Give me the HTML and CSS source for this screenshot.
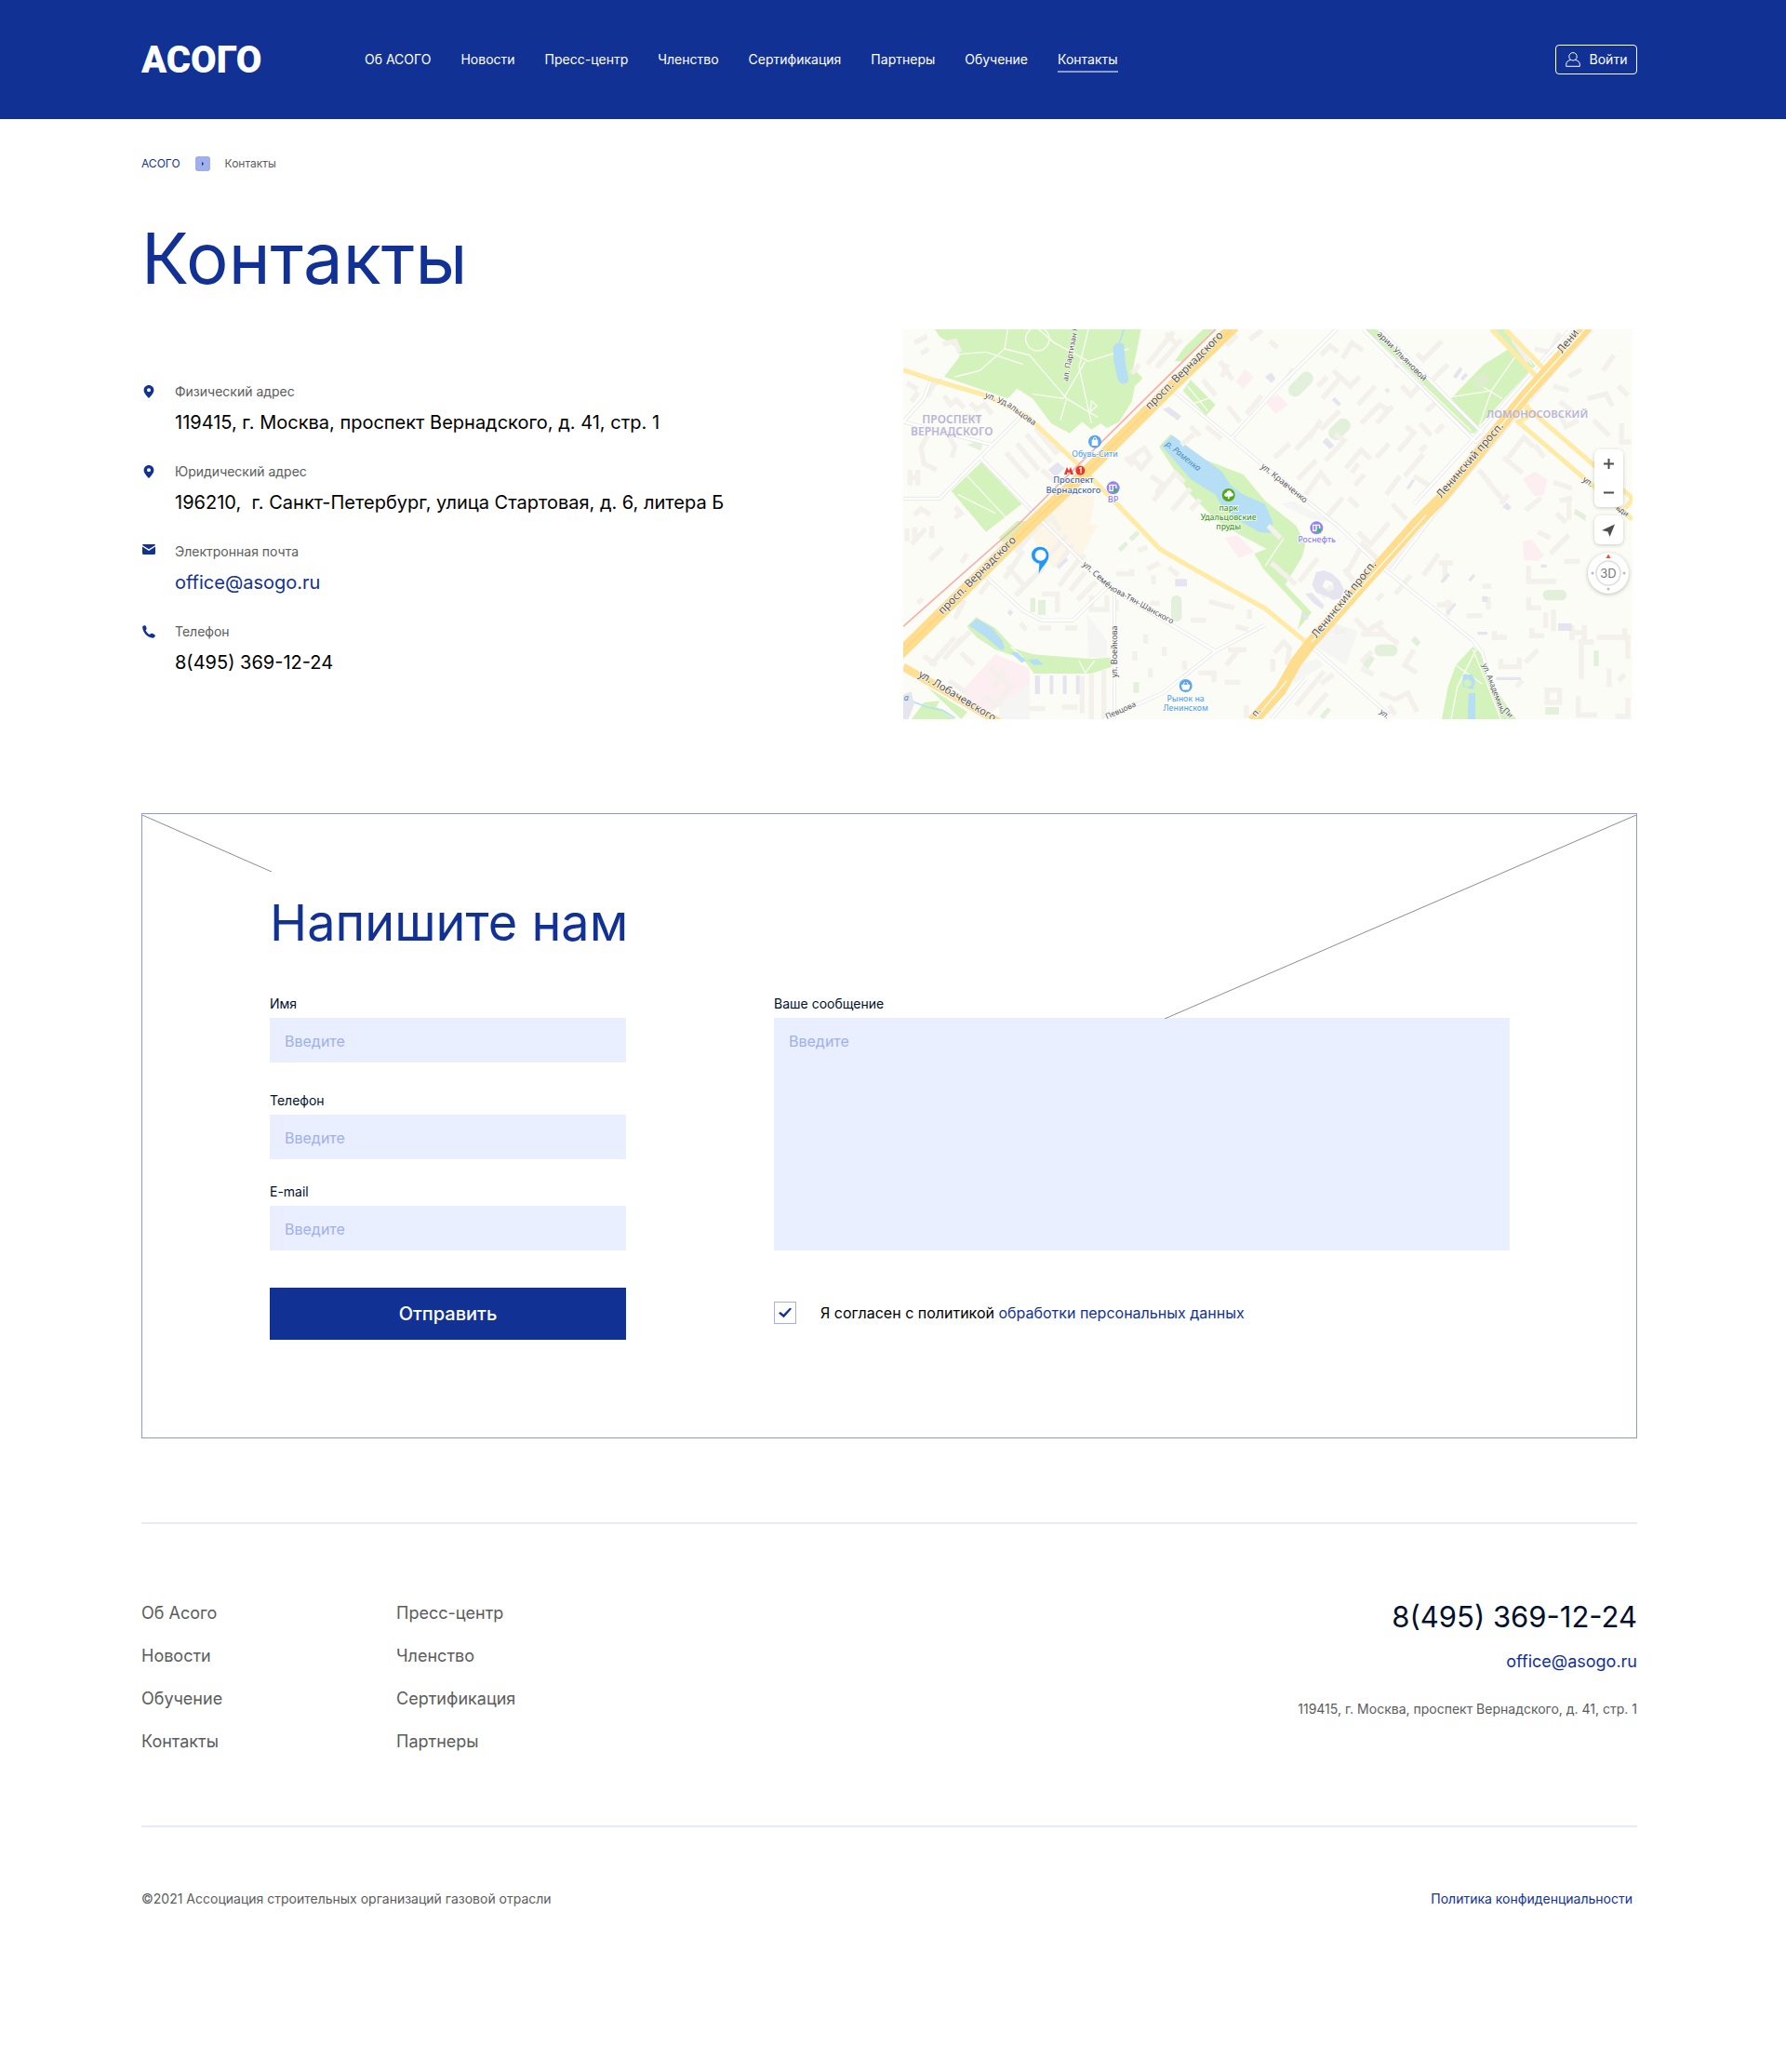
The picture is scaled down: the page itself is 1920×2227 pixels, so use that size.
FILE: index.html
```html
<!DOCTYPE html>
<html lang="ru">
<head>
<meta charset="utf-8">
<meta name="viewport" content="width=device-width, initial-scale=1">
<title>Контакты — АСОГО</title>
<link rel="stylesheet" href="styles.css">
</head>
<body>
<header class="header">
  <a class="logo" href="#">АСОГО</a>
  <nav class="nav">
    <a href="#">Об АСОГО</a>
    <a href="#">Новости</a>
    <a href="#">Пресс-центр</a>
    <a href="#">Членство</a>
    <a href="#">Сертификация</a>
    <a href="#">Партнеры</a>
    <a href="#">Обучение</a>
    <a class="nav-current" href="#">Контакты</a>
  </nav>
  <button class="login" type="button">
    <svg width="16" height="16" viewBox="0 0 16 16" fill="none" stroke="currentColor"><circle cx="8" cy="4.8" r="4.2"/><path d="M5.6 8.4C2.4 9 .7 10.800 .7 13.200V15.300H15.300V13.200C15.300 10.800 13.600 9 10.400 8.400"/></svg>
    Войти
  </button>
</header>

<main class="wrap">
  <nav class="crumbs">
    <a href="#">АСОГО</a>
    <svg width="16" height="16" viewBox="0 0 16 16"><rect width="16" height="16" rx="3" fill="#a0b0ea"/><path d="M7 5.800L9 8L7 10.200Z" fill="#123194"/></svg>
    <span>Контакты</span>
  </nav>
  <h1 class="title">Контакты</h1>

  <section class="contacts">
    <dl class="contact-list">
      <div class="contact">
        <svg class="contact-icon" viewBox="0 0 16 20"><path fill-rule="evenodd" d="M8 3C4.900 3 2.600 5.300 2.600 8.200C2.600 11.300 5.500 14.500 8 17C10.500 14.500 13.400 11.300 13.400 8.200C13.400 5.300 11.100 3 8 3ZM8 6.200A2 2 0 1 1 8 10.200A2 2 0 1 1 8 6.200Z"/></svg>
        <dt>Физический адрес</dt>
        <dd>119415, г. Москва, проспект Вернадского, д. 41, стр. 1</dd>
      </div>
      <div class="contact">
        <svg class="contact-icon" viewBox="0 0 16 20"><path fill-rule="evenodd" d="M8 3C4.900 3 2.600 5.300 2.600 8.200C2.600 11.300 5.500 14.500 8 17C10.500 14.500 13.400 11.300 13.400 8.200C13.400 5.300 11.100 3 8 3ZM8 6.200A2 2 0 1 1 8 10.200A2 2 0 1 1 8 6.200Z"/></svg>
        <dt>Юридический адрес</dt>
        <dd>196210,&nbsp; г. Санкт-Петербург, улица Стартовая, д. 6, литера Б</dd>
      </div>
      <div class="contact">
        <svg class="contact-icon" viewBox="0 0 16 20"><path d="M2 2H14Q15 2 15 3L8 7.200L1 3Q1 2 2 2ZM1 4.600L8 9L15 4.600V11.500Q15 13 13.500 13H2.500Q1 13 1 11.500Z"/></svg>
        <dt>Электронная почта</dt>
        <dd><a href="#">office@asogo.ru</a></dd>
      </div>
      <div class="contact">
        <svg class="contact-icon" viewBox="0 0 16 20"><path d="M1.200 4.500C1.600 3.600 2.800 3 4 3.200C5 3.500 5.500 5.500 5.600 6.600C5.600 7.600 4.600 8 4.600 8.500C5.300 10.300 7 12 8.700 13C9.300 13 9.900 11.600 11 11.700C12.300 11.900 14.500 13 14.900 14C14.900 15.300 13.600 16.700 12.300 16.800C6.300 16.300 1 10.300 1.200 4.500Z"/></svg>
        <dt>Телефон</dt>
        <dd>8(495) 369-12-24</dd>
      </div>
    </dl>

    <div class="map">
      <svg class="map-canvas" viewBox="33 27 2352 1257" role="img" aria-label="Карта проезда">
        <rect x="33" y="27" width="2352" height="1257" fill="#fbfcf6"/>
        <!-- quarters -->
        <g fill="#f5f5f4">
          <path d="M625 945L690 1030V1085H630ZM1385 960L1500 1000L1460 1110L1350 1040ZM1500 860L1620 700L1680 690L1605 800ZM1300 1110L1370 1090L1390 1110L1290 1170ZM345 1230L440 1130V1284H340ZM1250 590L1290 580L1420 650L1350 640Z"/>
        </g>
        <path fill="#fdf6e6" d="M440 660L560 520L650 570L640 640L520 800L460 720ZM470 645L600 645L660 660L600 770Z"/>
        <g fill="#fdeff1">
          <path d="M220 1195L330 1075L440 1120V1170L350 1230L290 1284ZM1070 700L1110 690L1165 745L1115 765ZM1200 260L1240 235L1275 270L1235 300ZM1105 195L1135 155L1165 180L1130 220ZM2030 510L2070 485L2110 510L2100 560L2070 565ZM2030 710L2060 705L2100 755L2080 775L2035 770Z"/>
        </g>
        <!-- parks -->
        <g fill="#d4f2bb">
          <path d="M135 27L150 50L205 85L215 115L165 180L370 250L400 218L450 250L510 330L570 362L610 325L640 350L670 330L690 345L730 325L770 260L780 210L805 185L775 150L800 27Z"/>
          <path d="M908 130L940 85L1000 27H1035L935 130ZM935 225L960 190L1040 270L1010 305ZM188 548L285 455L415 590L300 680ZM340 700L400 645H440L355 715Z"/>
          <path d="M858 405L895 365L1000 445L1130 495L1200 580L1300 660L1330 720L1320 760L1265 850L1350 940L1305 995L1320 935L1195 800L1165 750L1205 735L1120 690L1040 640L960 560Z"/>
          <path d="M1525 27H1560L1890 340L1880 360Q1865 368 1850 350ZM1800 250L1905 140L1990 88L2050 165L1885 345ZM1940 27H1980L2075 150H2055Z"/>
          <path d="M238 985L268 955L330 990L390 1055L450 1075L640 1090L700 1085L705 1115L640 1137H455L420 1090L330 1060L270 1020ZM60 1284L100 1230L150 1225L140 1245L200 1284ZM110 1180L240 1260L220 1284Z"/>
          <path d="M1770 1284L1790 1180L1815 1110L1870 1050L1900 1075L1910 1140L2010 1284Z"/>
        </g>
        <path fill="none" stroke="#fbfcf6" stroke-width="4" d="M370 27L360 90L280 160L200 180M360 90L440 110L560 250L540 320M470 27L520 70L630 130L760 90M620 130L550 250L450 235M560 250L660 310M630 27L600 150L640 330M180 110L300 100L420 140M465 20a38 38 0 1 0 2 0M640 258l18 16l-22 18zM950 210L1015 290M1030 245L960 270M240 500L370 640M210 560L330 620M1260 700L1200 790M1800 245L1930 225L2010 110M1930 225L1890 340M1890 205L1965 250M1880 1060L1820 1180L1800 1284M1870 1060L1920 1180L1960 1284M1815 1110L1900 1170M600 1095L620 1135L650 1095M380 1050L420 1085M1530 35L1865 355M1975 30L2060 140"/>
        <g fill="#e2f0dc">
          <rect x="1267" y="182" width="96" height="44" rx="22" transform="rotate(-45 1315 204)"/>
          <rect x="1400" y="326" width="80" height="46" rx="22" transform="rotate(-45 1440 349)"/>
          <rect x="897" y="885" width="34" height="84" rx="16"/>
          <rect x="1553" y="1043" width="74" height="38" rx="18"/>
          <rect x="2096" y="867" width="76" height="34" rx="16"/>
          <rect x="1870" y="170" width="54" height="44" rx="20" fill="#dceecb" transform="rotate(-45 1897 192)"/>
          <path d="M725 735l24-24 10 10-24 24zM760 700l26-24 10 10-24 24zM443 893h16v46h-16zM468 900h24v48h-24zM775 1165h18v34h-18zM1514 1110l22-34 18 12-22 34zM1670 1030l14-14 18 20-12 14zM2260 1063h16v50h-16zM2104 1245h44v24h-44zM1376 1275l26-30 10 10-24 30zM2200 605l36 22-4 18-36-24zM240 400l26-12 24 12-8 18zM1585 223l10-8 8 10-8 8z"/>
        </g>
        <!-- water -->
        <g fill="#b6dff5">
          <path d="M710 85Q720 62 745 75L750 140L760 185Q757 207 735 200L725 190L712 130Z"/>
          <path d="M866 402L900 368L1060 485L1090 530L1130 560L1200 590L1225 650L1220 684L1180 680L1110 640L1060 595L1040 560L960 510Z"/>
          <path d="M245 982L270 960L320 990L352 1030L360 1055L350 1062L300 1020ZM378 1068L400 1068L430 1095L415 1102ZM435 1092L465 1090L486 1108L455 1110Z"/>
          <path d="M1838 1140h30l10 20-8 28-32-10zM1856 1200h22v84h-24z"/>
        </g>
        <circle cx="1853" cy="1168" r="12" fill="#d4f2bb"/>
        <path fill="none" stroke="#b6dff5" stroke-width="5" d="M33 1215L110 1245L160 1255L200 1280M745 27L730 70"/>
        <!-- houses -->
        <g fill="none" stroke="#f4f0ec" stroke-width="16">
          <path d="M70 70l40-20M90 105l25-15M160 75l40-10l15 35M45 200l35 20M60 260l20-30M110 245l20-40l30-15M165 240l20 30l20-15l25 25M250 265l20 20l25-15l25 30M235 305l50 15M55 480v50M80 480v50M55 505h25M110 370l-20 40l10 50l40 20M180 370l20 35l-10 35M70 625l20-20l30 20M200 600l20 20l-20 15M400 395l70 85M430 365l80 90M460 345l70 85M365 425l70 80M480 480l50 45M520 405l20 15M820 140l85-105M850 150l80-90M880 40l30 30M770 170l25-30M1000 190l40 50M1055 130l40 60M1075 80l35-35M1080 275l40 50M1140 300l50-60M1060 180l20-40M1150 60l40-30M930 400l40-35M990 370l-30-30M1010 340l50 40M770 440l40-30l20 30l-30 35zM750 440l25 25M840 580l70-90l30 30M900 610l60-70M960 610l30-35M830 500l40 25l-20 30"/>
          <path d="M1215 65l25 20M1290 155l-20 35M1380 110l30-30l25 20M1450 120l30-50l35 25M1370 210l30-30M1385 250l60-70M1230 440l50-45M1300 415l60-65M1340 380l40-60M1420 160l55 50l30-30M1500 270l55-60M1510 330l60-60l30 20M1560 330l50-55M1640 210l30 30l35-40M1620 150l30-40M1690 105l20 20l60-60M1740 190l50-50M1720 290l35-30M1440 290l-60 60M1230 490l40 40M1305 510l60-60M1330 560l50-70l30 40M1395 450l60-65l-30-20M1460 475l50-60l30 30M1480 490l20-30M1560 440l40-45M1630 420l50-60l-25-20M1650 500l60-70M1700 420l20-20M1590 560l45-60M1610 590l45 50M1490 530l30-35M1400 630l50-60M1750 360l25-25M1700 330l35 40M1680 500l50 30M1500 600l-30-30M2000 60l50 70M2070 90l50 10l30-60M2130 210l50 15M2150 260l40 30M2180 180l40-25M2240 250l60-15l20 40M2260 320l50 50M2290 160l35-50M2340 210l30 30M2350 330v60h30M2150 300l20 40l40-20M1985 440l50-65l30 30M1970 440l60 50M2070 400l30 40M1890 480l40 50M1920 520l50 60M1960 590l25-30M2130 520l60 20M2150 580l40-10M2180 580v60M2040 610l50-40M2140 620l30 30"/>
          <path d="M45 670v40M70 665v45M125 660v40M60 720l45-50M120 770l40-40M200 960l30-60M280 880l30-40M220 780l20-30M80 910l15-15M100 1080l40 30M120 1110l80-90M165 1090l60-70M190 1060l60-60M180 1160l60 40M260 1110l-40-40M395 745l75-85l40-30l30 45M360 830l60-90M370 790l50 60M395 885l90-90M500 760l60-70M530 790l50-70M535 855l60-80l25-20M570 870l50-60M595 900l60-60M410 975l20 20M470 990h40M555 990h40M640 885v45h50v-45M720 900v35M480 880h50v60M440 1250h50M545 1245h50M640 1140v144M680 1125v159M610 1145v120M820 800l40-20M890 795l30 25M840 850v-30M720 815h50v-15M830 910h30M790 740l30-10M1020 905l80 20M960 965h50M1105 985l40 10M1150 960v-30M815 1010v30M780 1065v30M830 1120v30M875 1050v30M940 1095v30M1075 1110l35-45M1080 1060h60M1070 1165h50M985 1135h50v30M1140 1240v40M310 1120l70 60l-60 70M290 1210l60 30M330 1180l30-60"/>
          <path d="M1310 840l60-75M1385 890l30-35M1500 680l40 40l60-70M1460 820l55-100l60 60M1455 800l40 50M1600 745l15-15M1630 730l20-25M1710 820l30-40l20-30M1620 880l50-60M1560 900l20-20M1760 780h45M1780 780v55M1900 855h30M1790 900v50M1755 915h50M1850 950h50M1920 890v40M2050 890v35h40M2105 940v50M2130 930v70M2060 990v25h40M2190 980v50M2230 980v50M2190 1005h40M2360 990v40M2050 790v50h80v-10M2120 750l60-60M2080 680l40 20M2165 775h50M2280 775h50M1930 1020h50M1940 1000v30M1535 1010h50M1540 990l40-20M1430 1010v-30M1510 1010h30M1430 1000h30M1510 1100l35-35M1510 1120l40 20M1490 960l40 40l30-20l40 40l30 20M1680 1060l-30 50l40 25M1380 1170l40-30M1400 1200l-60 70M1390 1130l-90 110M1570 1200l50 20l40-20l30 60M1600 1240l20 30M1960 1090v25h60v-30M2210 1035h50M2220 1035v120M2270 1020h100v70M2310 1120v60M2340 1160l20-20M2110 1190h40v40h-40zM2210 1210v60h60M2370 1215v60h-40M2010 1180l20-20M2040 1100l40-40M1230 1070l30-35l20 20M1225 1130v-40M1280 1050l-10 60M1210 660l40 40M1220 780l80 70"/>
        </g>
        <g fill="#e6e5ef">
          <path d="M870 285l20-8 40 30-12 14zM500 480l30-25 24 20-30 28zM1200 180l20-14 14 20-14 14zM1385 390l14-14 24 26-14 12zM1415 255l10-10 20 22-8 8zM1805 180l24-32 8 8-20 30zM1830 185l16-18 8 8-16 18zM910 832h38v24h-38zM527 792l32-30 6 10-30 28zM458 1143h16v60h-16zM505 1143h12v60h-12zM548 1143h12v60h-12zM590 1143h12v60h-12zM2145 975h44v24h-44zM1945 1148h80v10h-80zM1900 888h18v18h-18zM1765 840l24-28 8 6-24 28zM1785 940l26-32 6 6-26 32zM1855 835l16-20 8 6-16 20zM1315 945l10-6 16 20-10 6zM2090 785h18v10h-18zM1885 1002h32v10h-32zM2125 130l12-8 8 14-10 12zM33 1205l26-10 10 40-20 49h-16zM368 940l10-10 10 10-10 12zM1655 540l20-30 8 4-18 28zM1965 600l14-14 16 14-10 12z"/>
          <path d="M1330 880l20-4 40 40-4 14-30-20zM1365 810l24-6 26 10 26 24 14 30-10 26-26 6-24-14-30-10-14-26zm30 24l-10 20 20 20 16-10-4-22z"/>
        </g>
        <!-- side streets -->
        <g fill="none" stroke-linejoin="round">
          <path stroke="#e3e3e6" stroke-width="12" d="M33 573H150L280 440L410 310M33 325L320 400M122 190L100 250L33 325M280 440L490 655M480 645L610 775L700 860L1040 1065M300 825L420 935L480 965H580L700 850M714 870V1284M680 1284L870 1200L1040 1065L1200 980M910 230L1200 470L1440 665L1555 775L1870 1030L1900 1070L1912 1110M1090 380L1245 210L1430 27M1350 1050L1600 1270M1220 1284L1330 1155M1517 27L1880 390L1910 360M1568 27L1900 360M2185 27L2050 175L1890 360L1680 590M2255 27L2140 150L1830 520L1740 630L1610 800"/>
          <path stroke="#fff" stroke-width="8" d="M33 573H150L280 440L410 310M33 325L320 400M122 190L100 250L33 325M280 440L490 655M480 645L610 775L700 860L1040 1065M300 825L420 935L480 965H580L700 850M714 870V1284M680 1284L870 1200L1040 1065L1200 980M910 230L1200 470L1440 665L1555 775L1870 1030L1900 1070L1912 1110M1090 380L1245 210L1430 27M1350 1050L1600 1270M1220 1284L1330 1155M1517 27L1880 390L1910 360M1568 27L1900 360M2185 27L2050 175L1890 360L1680 590M2255 27L2140 150L1830 520L1740 630L1610 800"/>
        </g>
        <!-- avenues -->
        <g fill="none" stroke-linejoin="round">
          <path stroke="#ffeaa6" stroke-width="15" d="M33 158L130 190L300 240L430 305L600 465L780 650L860 735L980 805L1200 927L1340 1042M1930 27L2075 180M1975 27L2100 155M2040 275L2385 572M2010 320L2385 640M2010 330L2045 310V270M2385 575L2360 605"/>
          <path stroke="#ffdf94" stroke-width="26" d="M33 1115L340 1292"/>
          <path stroke="#fbaeaa" stroke-width="5" d="M33 985L400 660L1042 25"/>
          <path stroke="#ffdd8f" stroke-width="38" d="M20 1075L450 650L640 470L895 215L1100 17M2240 17L2040 240L1770 570L1690 650L1350 1035L1300 1100L1250 1190L1160 1290"/>
          <path stroke="#ffcf74" stroke-width="3" d="M33 1062L450 650L640 470L895 215L1095 23"/>
          <path stroke="#fffaf0" stroke-width="4" d="M2230 27L2040 240L1950 350M1720 625L1350 1035M1270 1160L1170 1280"/>
        </g>
        <!-- labels -->
        <g class="map-street" font-size="27">
          <text transform="translate(563 195) rotate(-79)" font-size="25">ал. Партизан Г</text>
          <text transform="translate(295 245) rotate(23)">ул. Уд</text>
          <text transform="translate(366 274) rotate(36)">альцова</text>
          <text transform="translate(1560 44) rotate(45)">арии Ульяновой</text>
          <text transform="translate(1185 472) rotate(39)">ул. Кравченко</text>
          <text transform="translate(610 787) rotate(42)">ул. Семён</text>
          <text transform="translate(706 870) rotate(29)" font-size="25">ова-Тян-Шанского</text>
          <text transform="translate(722 1150) rotate(-90)">ул. Воейкова</text>
          <text transform="translate(690 1284) rotate(-24)" font-size="25">Певцова</text>
          <text transform="translate(1900 1108) rotate(69)" font-size="25">ул. Академика</text>
          <text transform="translate(1966 1256) rotate(48)" font-size="25">Пи</text>
          <text transform="translate(1568 1262) rotate(42)" font-size="25">ул.</text>
          <text transform="translate(2222 515) rotate(35)">ул.</text>
          <text transform="translate(2330 605) rotate(38)" font-size="25">ьди</text>
        </g>
        <g class="map-street" font-size="35">
          <text transform="translate(828 287) rotate(-45)">просп. Вернадского</text>
          <text transform="translate(160 947) rotate(-45)">просп. Вернадского</text>
          <text transform="translate(1768 572) rotate(-49)">Ленинский просп.</text>
          <text transform="translate(1366 1024) rotate(-51)">Ленинский просп.</text>
          <text transform="translate(2158 106) rotate(-51)">Лени</text>
          <text transform="translate(80 1145) rotate(31)" font-size="34">ул. Лобачевского</text>
          <text transform="translate(1170 1278) rotate(-50)" font-size="30">п.</text>
        </g>
        <g class="map-area" text-anchor="middle">
          <text x="190" y="330" font-size="36">ПРОСПЕКТ</text>
          <text x="190" y="368" font-size="36">ВЕРНАДСКОГО</text>
          <text x="2078" y="312" font-size="34">ЛОМОНОСОВСКИЙ</text>
        </g>
        <g class="map-poi" font-size="28" text-anchor="middle">
          <text x="651" y="437" font-size="26" fill="#5aa5ee">Обувь-Сити</text>
          <text x="582" y="521" fill="#4267ad">Проспект</text>
          <text x="582" y="554" fill="#4267ad">Вернадского</text>
          <text x="710" y="586" fill="#8f7ff0">BP</text>
          <text x="1082" y="611" font-size="26" fill="#459a24">парк</text>
          <text x="1082" y="641" font-size="26" fill="#459a24">Удальцовские</text>
          <text x="1082" y="671" font-size="26" fill="#459a24">пруды</text>
          <text x="1367" y="714" font-size="26" fill="#8f7ff0">Роснефть</text>
          <text x="944" y="1226" font-size="26" fill="#5aa5ee">Рынок на</text>
          <text x="944" y="1256" font-size="26" fill="#5aa5ee">Ленинском</text>
        </g>
        <g class="map-river" font-size="27">
          <text transform="translate(878 400) rotate(39)">р. Раменка</text>
          <text x="35" y="1224">а</text>
        </g>
        <!-- places -->
        <circle cx="651" cy="389" r="21" fill="#5aa5ee"/>
        <path d="M641 383h20v19h-20z" fill="#fff"/><path d="M646 384q0-9 5-9t5 9" fill="none" stroke="#fff" stroke-width="3"/>
        <path fill="#ea3329" d="M552 495L561 471L567 483L573 471L582 495H574L570 486L567 492L564 486L560 495Z"/>
        <circle cx="604" cy="482" r="15" fill="#ea3329"/><path d="M601 475l5-2v18" fill="none" stroke="#fff" stroke-width="4"/>
        <circle cx="710" cy="538" r="21" fill="#9483f7"/>
        <path d="M699 529h10v18h-10zM709 529h10q4 12-4 14h-6" fill="none" stroke="#fff" stroke-width="4"/>
        <circle cx="717" cy="546" r="7" fill="#2fc254"/>
        <circle cx="1366" cy="667" r="21" fill="#9483f7"/>
        <path d="M1355 658h10v18h-10zM1365 658h10q4 12-4 14h-6" fill="none" stroke="#fff" stroke-width="4"/>
        <circle cx="1373" cy="675" r="7" fill="#2fc254"/>
        <circle cx="1082" cy="561" r="21" fill="#52a912"/>
        <path d="M1080 574v-8h-7q-6-2-4-8q2-4 6-4q2-7 9-7t9 7q5 1 5 6t-7 6h-6v8z" fill="#fff"/>
        <circle cx="944" cy="1176" r="21" fill="#5aa5ee"/>
        <path d="M931 1174h26l-4 14h-18zM936 1173l5-9M952 1173l-5-9" fill="#fff" stroke="#fff" stroke-width="3"/>
        <path fill="#1e98ff" d="M476 728A27 27 0 0 1 502 757C502 780 480 790 470 816L472 782A27 27 0 0 1 476 728Z"/>
        <circle cx="476" cy="755" r="18" fill="#fff"/>
      </svg>
      <div class="map-controls">
        <div class="map-zoom">
          <button type="button" aria-label="Приблизить"><svg width="31" height="31" viewBox="0 0 31 31" stroke="#4d4d4d" stroke-width="2"><path d="M10 15.500H21M15.500 10V21"/></svg></button>
          <button type="button" aria-label="Отдалить"><svg width="31" height="31" viewBox="0 0 31 31" stroke="#4d4d4d" stroke-width="2"><path d="M10 15.500H21"/></svg></button>
        </div>
        <button class="map-locate" type="button" aria-label="Моё местоположение"><svg width="31" height="31" viewBox="0 0 31 31" fill="#4d4d4d"><path d="M22 9.500L16.500 23L14.500 17.500L8 16Z"/></svg></button>
        <button class="map-compass" type="button">
          <svg width="44" height="44" viewBox="0 0 44 44"><circle cx="22" cy="22" r="13" fill="none" stroke="#ddd" stroke-width="1.500"/><path d="M22 1.500L24.500 6H19.500Z" fill="#f43"/><circle cx="5" cy="22" r="1.500" fill="#bbb"/><circle cx="39" cy="22" r="1.500" fill="#bbb"/><circle cx="22" cy="39" r="1.500" fill="#bbb"/></svg>
          <span>3D</span>
        </button>
      </div>
    </div>
  </section>

  <form class="feedback">
    <svg class="fold fold-left" viewBox="0 0 139 61"><path d="M0 0L139 61"/></svg>
    <svg class="fold fold-right" viewBox="0 0 507 219"><path d="M0 219L507 0"/></svg>
    <h2>Напишите нам</h2>
    <div class="feedback-grid">
      <div class="fields">
        <div class="field field-name"><label for="name">Имя</label><input id="name" type="text" placeholder="Введите"></div>
        <div class="field"><label for="phone">Телефон</label><input id="phone" type="tel" placeholder="Введите"></div>
        <div class="field"><label for="email">E-mail</label><input id="email" type="email" placeholder="Введите"></div>
      </div>
      <div class="field field-message"><label for="message">Ваше сообщение</label><textarea id="message" placeholder="Введите"></textarea></div>
      <button class="submit" type="submit">Отправить</button>
      <div class="consent">
        <input id="consent" type="checkbox" checked>
        <label for="consent">Я согласен с политикой <a href="#">обработки персональных данных</a></label>
      </div>
    </div>
  </form>
</main>

<footer class="wrap footer">
  <div class="footer-main">
    <nav class="footer-links">
      <a href="#">Об Асого</a><a href="#">Пресс-центр</a>
      <a href="#">Новости</a><a href="#">Членство</a>
      <a href="#">Обучение</a><a href="#">Сертификация</a>
      <a href="#">Контакты</a><a href="#">Партнеры</a>
    </nav>
    <address class="footer-contacts">
      <span class="footer-phone">8(495) 369-12-24</span>
      <a class="footer-email" href="#">office@asogo.ru</a>
      <span class="footer-address">119415, г. Москва, проспект Вернадского, д. 41, стр. 1</span>
    </address>
  </div>
  <div class="footer-bottom">
    <span>©2021 Ассоциация строительных организаций газовой отрасли</span>
    <a href="#">Политика конфиденциальности</a>
  </div>
</footer>
</body>
</html>
```
FILE: styles.css
```css
:root {
  --blue: #123194;
  --grey: #5c5c5c;
  --ink: #020f2c;
  --field: #e9effe;
  --hint: #a0b0ea;
  --rule: #e6eafa;
}

* { box-sizing: border-box; }

body {
  margin: 0;
  background: #fff;
  color: #000;
  font: 14px/20px Inter, "Liberation Sans", sans-serif;
}

a { color: inherit; text-decoration: none; }
button, input, textarea { font: inherit; }
button { cursor: pointer; }
svg { display: block; }

.wrap { padding: 0 160px 0 152px; }

/* header */
.header {
  display: flex;
  align-items: center;
  height: 128px;
  padding: 0 160px 0 152px;
  background: var(--blue);
  color: #fff;
}
.logo {
  width: 240px;
  padding-top: 2px;
  font: 900 40px/40px Roboto, sans-serif;
}
.nav { display: flex; gap: 32px; }
.nav a { padding: 4px 0 2px; border-bottom: 2px solid transparent; white-space: nowrap; }
.nav .nav-current { border-color: #8c9bcc; }
.login {
  display: flex;
  align-items: center;
  justify-content: center;
  gap: 10px;
  width: 88px;
  height: 32px;
  margin-left: auto;
  padding: 0;
  border: 1px solid #fff;
  border-radius: 4px;
  background: none;
  color: #fff;
}

/* breadcrumbs and title */
.crumbs {
  display: flex;
  gap: 16px;
  padding-top: 40px;
  font-size: 12px;
  line-height: 16px;
  color: var(--grey);
}
.crumbs a { color: var(--blue); }
.title {
  margin: 49px 0 33px;
  font-size: 76px;
  line-height: 88px;
  font-weight: 400;
  color: var(--blue);
}

/* contacts */
.contacts {
  display: grid;
  grid-template-columns: minmax(0, 1fr) 784px;
  padding-right: 5px;
}
.contact-list {
  display: flex;
  flex-direction: column;
  gap: 31px;
  margin: 0;
  padding-top: 57px;
}
.contact {
  display: grid;
  grid-template-columns: 16px 1fr;
  gap: 11px 20px;
}
.contact-icon { width: 16px; height: 20px; fill: var(--blue); }
.contact dt { color: var(--grey); }
.contact dd { grid-column: 2; margin: 0; font-size: 20px; line-height: 24px; }
.contact dd a { color: var(--blue); }

/* map */
.map { position: relative; }
.map-canvas { width: 100%; height: auto; font-family: "Noto Sans", sans-serif; }
.map-street { fill: #555; stroke: #fff; stroke-width: 4px; paint-order: stroke; }
.map-area { fill: #b9b5d6; font-weight: 600; }
.map-poi { font-weight: 500; stroke: #fff; stroke-width: 4px; paint-order: stroke; }
.map-river { fill: #4d8cc0; font-style: italic; }
.map-controls {
  position: absolute;
  top: 129px;
  right: 4px;
  display: flex;
  flex-direction: column;
  align-items: center;
  gap: 9px;
}
.map-controls button { display: block; padding: 0; border: 0; background: #fff; }
.map-zoom, .map-controls .map-locate {
  overflow: hidden;
  border-radius: 6px;
  box-shadow: 0 1px 4px rgba(0, 0, 0, .2);
}
.map-controls .map-compass {
  display: grid;
  place-items: center;
  border-radius: 50%;
  box-shadow: 0 1px 4px rgba(0, 0, 0, .25);
  color: #777;
  font-size: 13px;
  line-height: 16px;
}
.map-compass > * { grid-area: 1 / 1; }

/* feedback form */
.feedback {
  position: relative;
  margin-top: 101px;
  padding: 85px 136px 105px 137px;
  border: 1px solid #8b9bd0;
}
.fold { position: absolute; top: 1px; fill: none; stroke: #8c8c8c; stroke-width: 1px; }
.fold-left { left: 0; width: 139px; }
.fold-right { right: 0; width: 507px; }
.feedback h2 {
  margin: 0 0 45px;
  font-size: 54px;
  line-height: 64px;
  font-weight: 400;
  color: var(--blue);
}
.feedback-grid {
  display: grid;
  grid-template-columns: 383px minmax(0, 1fr);
  gap: 40px 159px;
  align-items: center;
}
.fields { display: flex; flex-direction: column; gap: 25px; }
.field { display: flex; flex-direction: column; gap: 5px; color: var(--ink); }
.field-name { padding-bottom: 6px; }
.field-message { align-self: stretch; }
.field input, .field textarea {
  width: 100%;
  height: 48px;
  padding: 2px 16px 0;
  border: 0;
  border-radius: 0;
  background: var(--field);
  font-size: 16px;
  line-height: 24px;
}
.field textarea { display: block; flex: 1; padding: 13px 16px; resize: none; }
.field ::placeholder { color: var(--hint); opacity: 1; }
.submit {
  height: 56px;
  border: 0;
  background: var(--blue);
  color: #fff;
  font-size: 20px;
  font-weight: 500;
}
.consent { display: flex; align-items: center; gap: 26px; padding-bottom: 2px; font-size: 16px; line-height: 24px; }
.consent a { color: var(--blue); }
.consent input {
  appearance: none;
  display: grid;
  place-items: center;
  width: 24px;
  height: 24px;
  margin: 0;
  border: 1px solid var(--hint);
}
.consent input:checked::before {
  content: "";
  width: 14px;
  height: 11px;
  background: var(--blue);
  clip-path: polygon(0 55%, 14% 42%, 38% 65%, 88% 0, 100% 12%, 40% 98%);
}

/* footer */
.footer { padding-bottom: 175px; margin-top: 90px; color: var(--grey); }
.footer-main {
  display: flex;
  justify-content: space-between;
  padding: 85px 0 79px;
  border: solid var(--rule);
  border-width: 2px 0;
}
.footer-links {
  display: grid;
  grid-template-columns: 274px auto;
  gap: 24px 0;
  font-size: 18px;
  line-height: 22px;
}
.footer-contacts { display: flex; flex-direction: column; align-items: flex-end; font-style: normal; }
.footer-phone { font-size: 31px; line-height: 30px; color: var(--ink); }
.footer-email { margin: 22px 0 30px; font-size: 18px; line-height: 22px; color: var(--blue); }
.footer-bottom { display: flex; justify-content: space-between; padding: 67px 5px 0 0; }
.footer-bottom a { color: var(--blue); }
```
